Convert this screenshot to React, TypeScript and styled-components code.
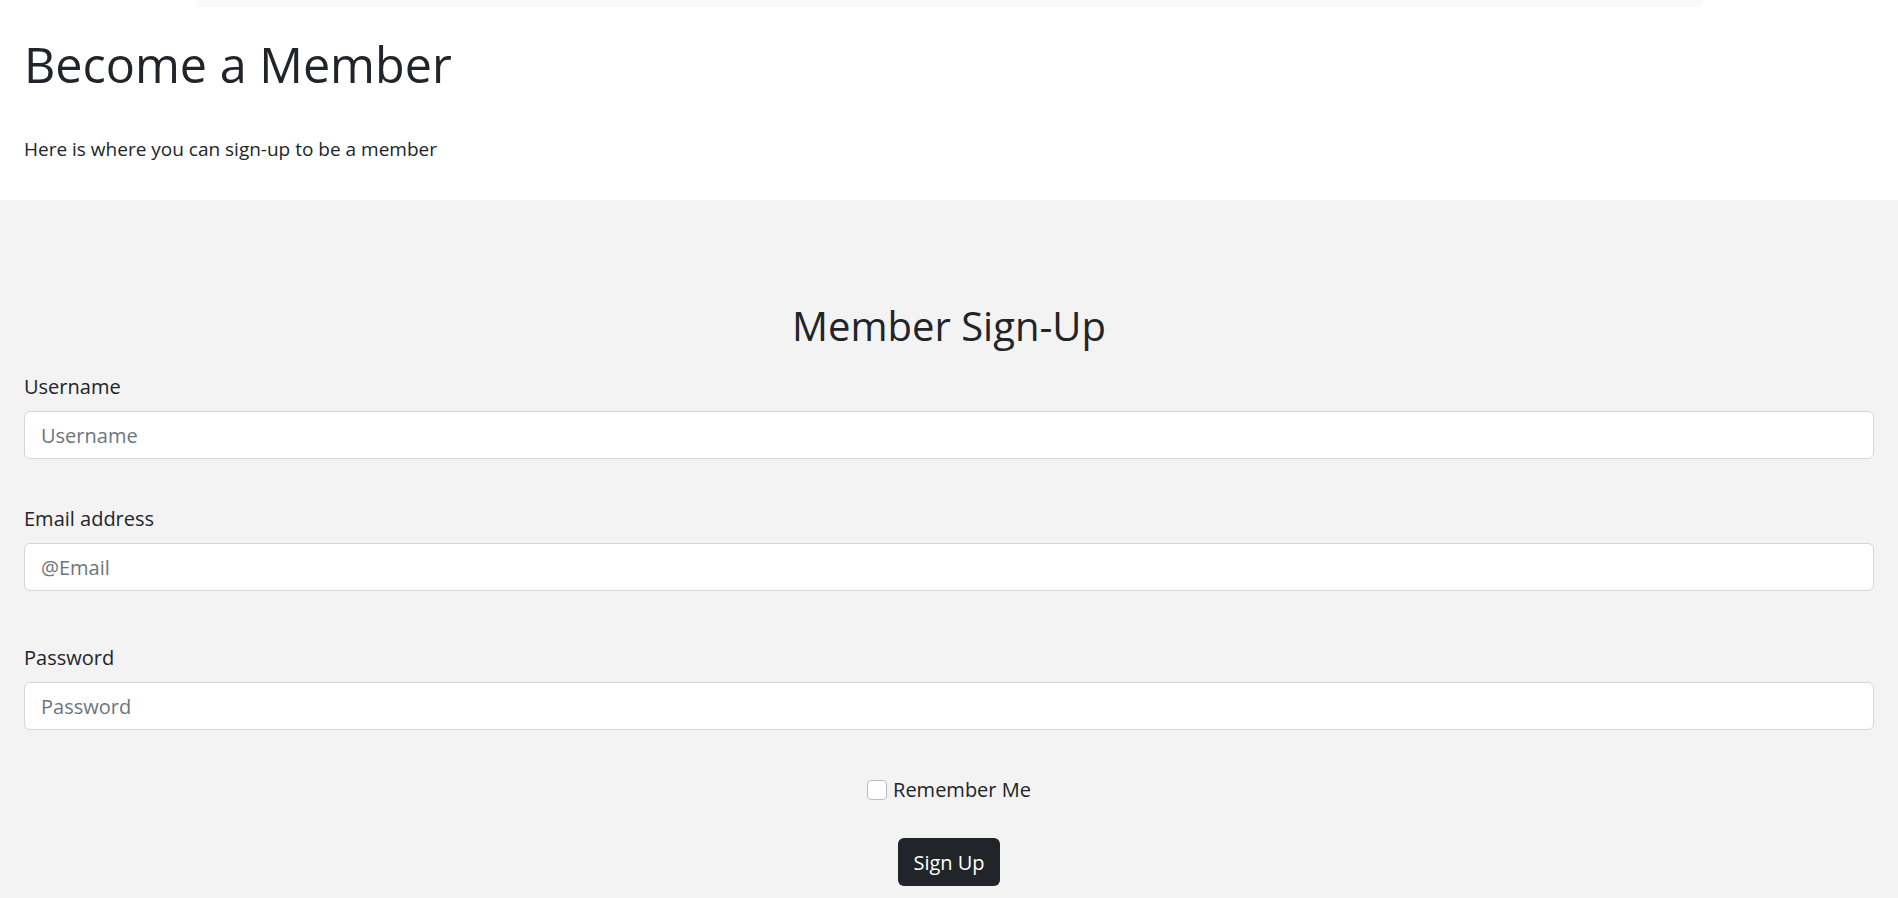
import React from 'react';
import styled, { createGlobalStyle } from 'styled-components';

const GlobalStyle = createGlobalStyle`
  html, body {
    margin: 0;
    padding: 0;
    background: #f3f3f3;
  }
  body {
    font-family: 'Open Sans', 'Liberation Sans', sans-serif;
    color: #212529;
  }
  * {
    box-sizing: border-box;
  }
`;

// Header area
const Top = styled.div`
  background: #fff;
`;

const TopStrip = styled.div`
  width: 1506px;
  height: 7px;
  margin: 0 auto;
  background: #f8f9fa;
`;

const Header = styled.header`
  padding: 28px 24px 36px;
`;

const Title = styled.h1`
  font-size: 48.5px;
  font-weight: 500;
  line-height: 58px;
  margin: 0 0 41px;
`;

const Lead = styled.p`
  font-size: 19px;
  font-weight: 400;
  line-height: 30px;
  margin: 0;
`;

// Form area
const FormSection = styled.section`
  background: #f3f3f3;
  padding: 102px 24px 14px;
`;

const FormTitle = styled.h2`
  text-align: center;
  font-size: 40px;
  font-weight: 500;
  line-height: 48px;
  margin: 0 0 22px;
`;

const Group = styled.div<{ $gap: number }>`
  margin-bottom: ${(p) => p.$gap}px;
`;

const Label = styled.label`
  display: block;
  font-size: 20px;
  line-height: 30px;
  margin-bottom: 9px;
`;

const Input = styled.input`
  display: block;
  width: 100%;
  height: 48px;
  padding: 8px 16px;
  font-family: inherit;
  font-size: 20px;
  color: #212529;
  background: #fff;
  border: 1px solid #d3d6d9;
  border-radius: 6px;
  outline: none;

  &::placeholder {
    color: #6c757d;
  }
`;

const CheckRow = styled.div`
  display: flex;
  justify-content: center;
  align-items: center;
  gap: 6px;
  font-size: 20px;
  line-height: 30px;
  margin-bottom: 33px;
`;

const Check = styled.span`
  width: 20px;
  height: 20px;
  background: #fff;
  border: 1px solid #b8bcc0;
  border-radius: 4px;
`;

const ButtonRow = styled.div`
  display: flex;
  justify-content: center;
`;

const Button = styled.button`
  height: 48px;
  padding: 0 15px;
  font-family: inherit;
  font-size: 20px;
  white-space: nowrap;
  color: #fff;
  background: #212529;
  border: none;
  border-radius: 6px;
`;

const fields = [
  { label: 'Username', placeholder: 'Username', type: 'text', gap: 45 },
  { label: 'Email address', placeholder: '@Email', type: 'email', gap: 52 },
  { label: 'Password', placeholder: 'Password', type: 'password', gap: 45 },
];

const App: React.FC = () => {
  return (
    <>
      <GlobalStyle />
      <Top>
        <TopStrip />
        <Header>
          <Title>Become a Member</Title>
          <Lead>Here is where you can sign-up to be a member</Lead>
        </Header>
      </Top>
      <FormSection>
        <FormTitle>Member Sign-Up</FormTitle>
        {fields.map((f) => (
          <Group key={f.label} $gap={f.gap}>
            <Label>{f.label}</Label>
            <Input type={f.type} placeholder={f.placeholder} />
          </Group>
        ))}
        <CheckRow>
          <Check />
          Remember Me
        </CheckRow>
        <ButtonRow>
          <Button>Sign Up</Button>
        </ButtonRow>
      </FormSection>
    </>
  );
};

export default App;
